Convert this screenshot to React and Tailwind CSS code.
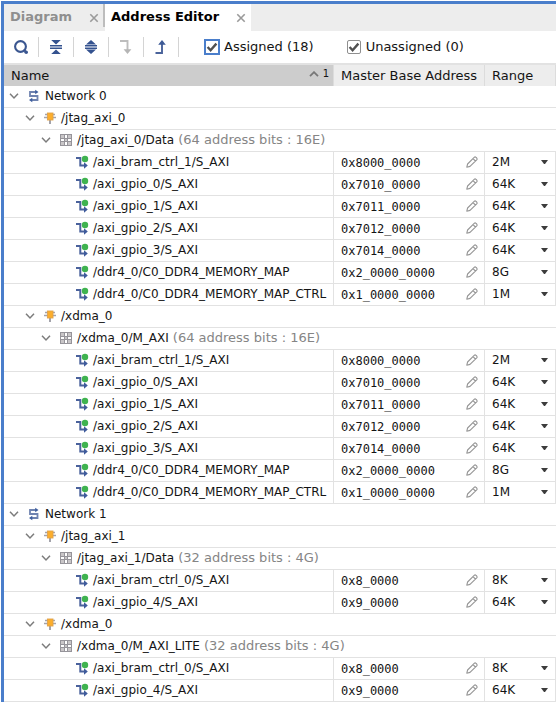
import { useState } from "react";

const SLAVES_64 = [
  ["/axi_bram_ctrl_1/S_AXI", "0x8000_0000", "2M"],
  ["/axi_gpio_0/S_AXI", "0x7010_0000", "64K"],
  ["/axi_gpio_1/S_AXI", "0x7011_0000", "64K"],
  ["/axi_gpio_2/S_AXI", "0x7012_0000", "64K"],
  ["/axi_gpio_3/S_AXI", "0x7014_0000", "64K"],
  ["/ddr4_0/C0_DDR4_MEMORY_MAP", "0x2_0000_0000", "8G"],
  ["/ddr4_0/C0_DDR4_MEMORY_MAP_CTRL", "0x1_0000_0000", "1M"],
];
const SLAVES_32 = [
  ["/axi_bram_ctrl_0/S_AXI", "0x8_0000", "8K"],
  ["/axi_gpio_4/S_AXI", "0x9_0000", "64K"],
];
const NETWORKS = [
  {
    name: "Network 0",
    masters: [
      { name: "/jtag_axi_0", space: "/jtag_axi_0/Data", note: "(64 address bits : 16E)", slaves: SLAVES_64 },
      { name: "/xdma_0", space: "/xdma_0/M_AXI", note: "(64 address bits : 16E)", slaves: SLAVES_64 },
    ],
  },
  {
    name: "Network 1",
    masters: [
      { name: "/jtag_axi_1", space: "/jtag_axi_1/Data", note: "(32 address bits : 4G)", slaves: SLAVES_32 },
      { name: "/xdma_0", space: "/xdma_0/M_AXI_LITE", note: "(32 address bits : 4G)", slaves: SLAVES_32 },
    ],
  },
];
const RANGES = ["4K", "8K", "64K", "1M", "2M", "8G"];

function buildRows(closed) {
  const rows = [];
  NETWORKS.forEach((net, n) => {
    const netId = `n${n}`;
    rows.push({ id: netId, kind: "network", name: net.name });
    if (closed[netId]) return;
    net.masters.forEach((m, i) => {
      const id = `${netId}m${i}`;
      rows.push({ id, kind: "master", name: m.name });
      if (closed[id]) return;
      rows.push({ id: `${id}s`, kind: "space", name: m.space, note: m.note });
      if (closed[`${id}s`]) return;
      m.slaves.forEach(([name, address, range], k) =>
        rows.push({ id: `${id}s${k}`, kind: "slave", name, address, range })
      );
    });
  });
  return rows;
}

function Chevron({ open }) {
  return (
    <svg width="10" height="8" viewBox="0 0 10 8" className={open ? "" : "-rotate-90"} aria-hidden="true">
      <path d="M1 1.7 5 5.9 9 1.7" fill="none" stroke="#7c7c7c" strokeWidth="1.5" />
    </svg>
  );
}

function NetworkIcon() {
  return (
    <svg width="12" height="14" viewBox="0 0 12 14" className="shrink-0" aria-hidden="true">
      <path d="M8 3H2v4h7.5v4H4" fill="none" stroke="#6f83b0" strokeWidth="1.8" />
      <path d="M7.2.7 10.5 3 7.2 5.3zM4.3 8.7 1 11l3.3 2.3z" fill="#3f5f9f" />
    </svg>
  );
}

function MasterIcon() {
  return (
    <svg width="12" height="14" viewBox="0 0 12 14" className="shrink-0" aria-hidden="true">
      <path d="M1 3.5h10M0 6.5h12" fill="none" stroke="#a3a3ab" strokeWidth="1.3" />
      <path d="M6 9v4" fill="none" stroke="#a3a3ab" strokeWidth="2" />
      <rect x="3.4" y="2" width="5.6" height="7" fill="#fcae2c" stroke="#e0a24a" strokeWidth=".9" />
    </svg>
  );
}

function SpaceIcon() {
  return (
    <svg width="12" height="12" viewBox="0 0 12 12" className="shrink-0" aria-hidden="true">
      <rect width="12" height="12" fill="#96949a" />
      <path d="M5 1h2v3H5zM1 5h3v2H1zM8 5h3v2H8zM5 8h2v3H5z" fill="#fff" />
      <path d="M1 1h3v3H1zM8 1h3v3H8zM5 5h2v2H5zM1 8h3v3H1zM8 8h3v3H8z" fill="#c9c6c8" />
    </svg>
  );
}

function SlaveIcon() {
  return (
    <svg width="13" height="14" viewBox="0 0 13 14" className="shrink-0" aria-hidden="true">
      <path d="M0 3h4.3v7.5H9" fill="none" stroke="#4a629c" strokeWidth="2" />
      <path d="M8 7.2 11.8 10.5 8 13.8z" fill="#3f5b9b" />
      <circle cx="9" cy="4" r="3.2" fill="#3fb34f" />
    </svg>
  );
}

function Pencil() {
  return (
    <svg width="12" height="12" viewBox="0 0 12 12" aria-hidden="true">
      <path
        d="M.8 11.2 1.6 8 8.2 1.3q.9-.8 1.8 0l.7.7q.8.9 0 1.8L4 10.4zM7 2.6 9.4 5"
        fill="none"
        stroke="#959595"
        strokeWidth="1.1"
        strokeLinejoin="round"
      />
    </svg>
  );
}

const TOOLS = [
  {
    label: "Search",
    art: (
      <>
        <circle cx="7.5" cy="7.5" r="5.4" fill="none" stroke="#3a5690" strokeWidth="2.1" />
        <path d="m10.8 10.8 2.2 2.2" stroke="#3a5690" strokeWidth="2" />
        <circle cx="13.2" cy="13.2" r="1.8" fill="#3a5690" />
      </>
    ),
  },
  {
    label: "Collapse all",
    art: (
      <>
        <path d="M3.2 1h9.6L8 5.4zM3.2 15h9.6L8 10.6z" fill="#34528f" />
        <path d="M2 6.8h12M2 9.2h12" stroke="#34528f" strokeWidth="1.4" />
      </>
    ),
  },
  {
    label: "Expand all",
    art: (
      <>
        <path d="M8 1l5 4.4H3zM8 15l5-4.4H3z" fill="#34528f" />
        <path d="M2 6.8h12M2 9.2h12" stroke="#34528f" strokeWidth="1.4" />
      </>
    ),
  },
  {
    label: "Assign",
    disabled: true,
    art: (
      <>
        <path d="M2 2h7.5v9" fill="none" stroke="#bdbdbd" strokeWidth="1.9" />
        <path d="M5.6 10.3h7.8L9.5 15z" fill="#b5b5b5" />
      </>
    ),
  },
  {
    label: "Unassign",
    art: (
      <>
        <path d="M2.5 14H9V5" fill="none" stroke="#4a639b" strokeWidth="1.9" />
        <path d="M5.2 5.7h7.6L9 1z" fill="#3d5a96" />
      </>
    ),
  },
];

function Filter({ id, label, focused }) {
  return (
    <div className="flex items-center gap-1">
      <span className={`relative flex h-4 w-4 ${focused ? "bg-[#4a7ecb]" : ""}`}>
        <input
          id={id}
          type="checkbox"
          defaultChecked
          className={
            focused
              ? "peer m-0.5 h-3 w-3 appearance-none bg-white"
              : "peer m-px h-[14px] w-[14px] appearance-none rounded-xs border border-[#8f8f8f] bg-white"
          }
        />
        <svg
          viewBox="0 0 16 16"
          className="pointer-events-none absolute inset-0 hidden h-4 w-4 peer-checked:block"
          aria-hidden="true"
        >
          <path d="m3.6 8 3 3.2 5.8-6.6" fill="none" stroke="#505050" strokeWidth="2.4" />
        </svg>
      </span>
      <label htmlFor={id} className="text-[13px] leading-4 whitespace-nowrap">
        {label}
      </label>
    </div>
  );
}

function TreeRow({ row, open, onToggle }) {
  const indent = { network: "pl-1", master: "pl-5", space: "pl-9" }[row.kind];
  return (
    <tr className="h-[22px]">
      <td colSpan={3} className="p-0">
        <div className={`flex h-[21px] items-center pb-0.5 ${indent}`}>
          <button
            type="button"
            aria-label={`Toggle ${row.name}`}
            aria-expanded={open}
            onClick={onToggle}
            className="mr-2 flex h-4 w-3 items-center justify-center"
          >
            <Chevron open={open} />
          </button>
          {row.kind === "network" && <NetworkIcon />}
          {row.kind === "master" && <MasterIcon />}
          {row.kind === "space" && <SpaceIcon />}
          <span className="ml-[5px] flex items-baseline gap-1 whitespace-nowrap">
            {row.name}
            {row.note && <span className="text-[13px] text-[#858585]">{row.note}</span>}
          </span>
        </div>
      </td>
    </tr>
  );
}

function SlaveRow({ row }) {
  return (
    <tr className="h-[22px]">
      <td className="border-r p-0">
        <div className="flex h-[21px] items-center gap-1 pb-0.5 pl-[72px]">
          <SlaveIcon />
          <span className="whitespace-nowrap">{row.name}</span>
        </div>
      </td>
      <td className="border-r p-0">
        <div className="flex h-[21px] items-center justify-between pr-1.5 pl-[7px]">
          <span className="font-['DejaVu_Sans_Mono',monospace]">{row.address}</span>
          <button type="button" aria-label={`Edit base address of ${row.name}`} className="flex pb-0.5">
            <Pencil />
          </button>
        </div>
      </td>
      <td className="border-r p-0">
        <div className="relative flex h-[21px] items-center pb-0.5">
          <select
            aria-label={`Range of ${row.name}`}
            defaultValue={row.range}
            className="h-full w-full appearance-none bg-transparent pr-5 pl-[7px] leading-4"
          >
            {RANGES.map((r) => (
              <option key={r}>{r}</option>
            ))}
          </select>
          <svg
            width="7"
            height="4"
            viewBox="0 0 7 4"
            className="pointer-events-none absolute right-[7px]"
            aria-hidden="true"
          >
            <path d="M0 0h7L4 4H3z" fill="#3c3c3c" />
          </svg>
        </div>
      </td>
    </tr>
  );
}

function TabClose({ name }) {
  return (
    <button type="button" aria-label={`Close ${name}`} className="flex pt-px">
      <svg width="10" height="10" viewBox="0 0 10 10" aria-hidden="true">
        <path d="m1.3 1.3 7.4 7.4M8.7 1.3 1.3 8.7" stroke="#9a9a9a" strokeWidth="1.6" />
      </svg>
    </button>
  );
}

export default function App() {
  const [closed, setClosed] = useState({});
  const toggle = (id) => setClosed((c) => ({ ...c, [id]: !c[id] }));

  return (
    <div className="bg-white pt-px pl-px font-['DejaVu_Sans',sans-serif] text-[12px] leading-4 text-[#141414]">
      <div className="border-t-3 border-l-3 border-[#4a7ecb]">
        <div role="tablist" className="flex h-[27px] bg-[#ededed] text-[13px] font-bold">
          <div className="flex w-[99px] items-center justify-between pr-1 pl-[6px]">
            <button type="button" role="tab" aria-selected="false" className="pb-px font-bold text-[#8f8f8f]">
              Diagram
            </button>
            <TabClose name="Diagram" />
          </div>
          <div className="h-[23px] border-l-2 border-[#bdbdbd]" />
          <div className="flex w-[146px] items-center justify-between bg-white pr-[5px] pl-[6px]">
            <button type="button" role="tab" aria-selected="true" className="pb-px font-bold whitespace-nowrap text-black">
              Address Editor
            </button>
            <TabClose name="Address Editor" />
          </div>
        </div>

        <div className="flex h-8 items-center">
          {TOOLS.map((t) => (
            <div key={t.label} className="flex w-[35px] items-center justify-between border-r border-[#d4d4d4]">
              <button
                type="button"
                aria-label={t.label}
                disabled={t.disabled}
                className="flex h-5 w-full items-center justify-center"
              >
                <svg width="16" height="16" viewBox="0 0 16 16" aria-hidden="true">
                  {t.art}
                </svg>
              </button>
            </div>
          ))}
          <div className="flex gap-8 pl-[25px]">
            <Filter id="assigned" label="Assigned (18)" focused />
            <Filter id="unassigned" label="Unassigned (0)" />
          </div>
        </div>

        <table className="w-full table-fixed border-separate border-spacing-0 border-t-2 border-[#e2e2e2] [&_td]:border-b [&_td]:border-[#e2e2e2]">
          <colgroup>
            <col />
            <col className="w-[151px]" />
            <col className="w-[71px]" />
          </colgroup>
          <thead>
            <tr className="h-[21px] bg-[#ededed] text-left text-[13px]">
              <th className="border-r border-[#dcdcdc] bg-[#cdcdcd] p-0 font-normal" aria-sort="ascending">
                <div className="flex items-center justify-between pr-1 pl-[7px]">
                  <span>Name</span>
                  <span className="flex items-center gap-1 pb-1 text-[10px] leading-3">
                    <svg width="10" height="6" viewBox="0 0 10 6" aria-hidden="true">
                      <path d="m1 5.2 4-4 4 4" fill="none" stroke="#777" strokeWidth="1.8" />
                    </svg>
                    1
                  </span>
                </div>
              </th>
              <th className="border-r border-[#dcdcdc] py-0 pr-0 pl-[7px] font-normal whitespace-nowrap">
                Master Base Address
              </th>
              <th className="border-r border-[#dcdcdc] py-0 pr-0 pl-[7px] font-normal">Range</th>
            </tr>
          </thead>
          <tbody>
            {buildRows(closed).map((row) =>
              row.kind === "slave" ? (
                <SlaveRow key={row.id} row={row} />
              ) : (
                <TreeRow key={row.id} row={row} open={!closed[row.id]} onToggle={() => toggle(row.id)} />
              )
            )}
          </tbody>
        </table>
      </div>
    </div>
  );
}
